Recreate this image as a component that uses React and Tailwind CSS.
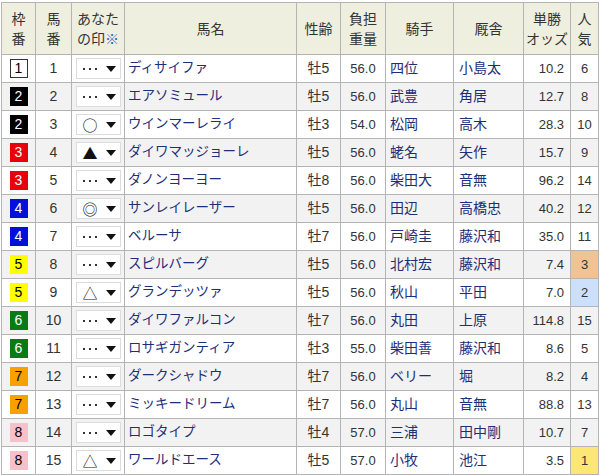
import React from 'react';

const FRAME = {
  1: 'bg-white text-black border border-[#333]',
  2: 'bg-black text-white',
  3: 'bg-[#e8000b] text-white',
  4: 'bg-[#0010d8] text-white',
  5: 'bg-[#ffff00] text-black',
  6: 'bg-[#0a7a14] text-white',
  7: 'bg-[#f7a100] text-black',
  8: 'bg-[#f9c0cc] text-black',
};

const POP = {
  1: 'bg-[#fbe676]',
  2: 'bg-[#cde0fb]',
  3: 'bg-[#f1c394]',
};

const horses = [
  [1, 1, '···', 'ディサイファ', '牡5', '56.0', '四位', '小島太', '10.2', 6],
  [2, 2, '···', 'エアソミュール', '牡5', '56.0', '武豊', '角居', '12.7', 8],
  [2, 3, '○', 'ウインマーレライ', '牡3', '54.0', '松岡', '高木', '28.3', 10],
  [3, 4, '▲', 'ダイワマッジョーレ', '牡5', '56.0', '蛯名', '矢作', '15.7', 9],
  [3, 5, '···', 'ダノンヨーヨー', '牡8', '56.0', '柴田大', '音無', '96.2', 14],
  [4, 6, '◎', 'サンレイレーザー', '牡5', '56.0', '田辺', '高橋忠', '40.2', 12],
  [4, 7, '···', 'ベルーサ', '牡7', '56.0', '戸崎圭', '藤沢和', '35.0', 11],
  [5, 8, '···', 'スピルバーグ', '牡5', '56.0', '北村宏', '藤沢和', '7.4', 3],
  [5, 9, '△', 'グランデッツァ', '牡5', '56.0', '秋山', '平田', '7.0', 2],
  [6, 10, '···', 'ダイワファルコン', '牡7', '56.0', '丸田', '上原', '114.8', 15],
  [6, 11, '···', 'ロサギガンティア', '牡3', '55.0', '柴田善', '藤沢和', '8.6', 5],
  [7, 12, '···', 'ダークシャドウ', '牡7', '56.0', 'ベリー', '堀', '8.2', 4],
  [7, 13, '···', 'ミッキードリーム', '牡7', '56.0', '丸山', '音無', '88.8', 13],
  [8, 14, '···', 'ロゴタイプ', '牡4', '57.0', '三浦', '田中剛', '10.7', 7],
  [8, 15, '△', 'ワールドエース', '牡5', '57.0', '小牧', '池江', '3.5', 1],
];

const th = 'border border-[#b4b4b4] bg-[#efefe0] font-normal text-[14px] leading-[20px] text-[#333] text-center align-middle';
const td = 'border border-[#b4b4b4] h-[28px] p-0 align-middle';

// select-like box holding the user's mark
const MarkSelect = ({ mark }) => (
  <div className="mx-auto flex h-[21px] w-[45px] items-center justify-between border border-[#dcdcdc] bg-white pl-[6px] pr-[4px]">
    {mark === '···' ? (
      <span className="flex w-[14px] justify-between">
        <i className="block h-[2px] w-[2px] bg-[#333]" />
        <i className="block h-[2px] w-[2px] bg-[#333]" />
        <i className="block h-[2px] w-[2px] bg-[#333]" />
      </span>
    ) : (
      <span className="font-['Noto_Sans_CJK_JP',sans-serif] text-[15px] leading-none text-[#111]">{mark}</span>
    )}
    <svg width="10" height="6" viewBox="0 0 10 6">
      <path d="M0 0h10L5 6z" fill="#111" />
    </svg>
  </div>
);

export default function App() {
  return (
    <div className="h-[475px] w-[600px] bg-white pl-[1px] pt-[2px] font-['Liberation_Sans','Noto_Sans_CJK_JP',sans-serif]">
      <table className="w-[597px] table-fixed border-collapse">
        <colgroup>
          <col className="w-[34px]" />
          <col className="w-[36px]" />
          <col className="w-[53px]" />
          <col className="w-[172px]" />
          <col className="w-[44px]" />
          <col className="w-[45px]" />
          <col className="w-[68px]" />
          <col className="w-[70px]" />
          <col className="w-[47px]" />
          <col className="w-[28px]" />
        </colgroup>
        <thead>
          <tr className="h-[52px]">
            <th className={th}>枠<br />番</th>
            <th className={th}>馬<br />番</th>
            <th className={th}>あなた<br />の印<span className="text-[#2f62c8]">※</span></th>
            <th className={th}>馬名</th>
            <th className={th}>性齢</th>
            <th className={th}>負担<br />重量</th>
            <th className={th}>騎手</th>
            <th className={th}>厩舎</th>
            <th className={th}>単勝<br />オッズ</th>
            <th className={th}>人<br />気</th>
          </tr>
        </thead>
        <tbody className="text-[13px] text-[#333]">
          {horses.map(([frame, num, mark, name, sex, weight, jockey, trainer, odds, pop]) => (
            <tr key={num} className={num % 2 === 0 ? 'bg-[#f2f2f2]' : 'bg-white'}>
              <td className={td}>
                <div className={`mx-auto flex h-[19px] w-[18px] items-center justify-center text-[14px] ${FRAME[frame]}`}>
                  {frame}
                </div>
              </td>
              <td className={`${td} text-center text-[14px]`}>{num}</td>
              <td className={td}>
                <MarkSelect mark={mark} />
              </td>
              <td className={`${td} pl-[3px] text-[13.5px] text-[#1c2f78]`}>{name}</td>
              <td className={`${td} text-center text-[14px]`}>{sex}</td>
              <td className={`${td} text-center`}>{weight}</td>
              <td className={`${td} pl-[4px] text-[14px] text-[#1c2f78]`}>{jockey}</td>
              <td className={`${td} pl-[5px] text-[14px] text-[#1c2f78]`}>{trainer}</td>
              <td className={`${td} pr-[6px] text-right`}>{odds}</td>
              <td className={`${td} text-center ${POP[pop] || ''}`}>{pop}</td>
            </tr>
          ))}
        </tbody>
      </table>
    </div>
  );
}
